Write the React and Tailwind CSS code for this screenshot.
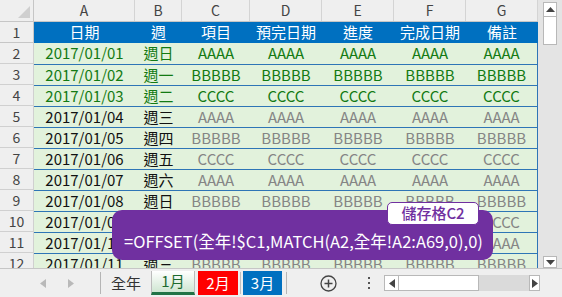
const cols = [
  { key: 'A', w: 'w-[101px]' },
  { key: 'B', w: 'w-[47px]' },
  { key: 'C', w: 'w-[68px]' },
  { key: 'D', w: 'w-[72px]' },
  { key: 'E', w: 'w-[72px]' },
  { key: 'F', w: 'w-[72px]' },
  { key: 'G', w: 'w-[72px]' },
];

const heads = ['日期', '週', '項目', '預完日期', '進度', '完成日期', '備註'];
const days = ['週日', '週一', '週二', '週三', '週四', '週五', '週六'];
const items = ['AAAA', 'BBBBB', 'CCCC'];

const rows = Array.from({ length: 11 }, (_, i) => {
  const d = String(i + 1).padStart(2, '0');
  const v = items[i % 3];
  return [`2017/01/${d}`, days[i % 7], v, v, v, v, v];
});

function Cell({ w, className = '', children }) {
  return (
    <div className={`${w} shrink-0 flex items-center justify-center whitespace-nowrap overflow-hidden ${className}`}>
      {children}
    </div>
  );
}

function Tri({ dir }) {
  return (
    <svg width="6" height="9" viewBox="0 0 6 9">
      {dir === 'l' ? <path d="M6 0 L0 4.5 L6 9 Z" fill="currentColor" /> : <path d="M0 0 L6 4.5 L0 9 Z" fill="currentColor" />}
    </svg>
  );
}

function TriV({ dir }) {
  return (
    <svg width="9" height="5" viewBox="0 0 9 5">
      {dir === 'u' ? <path d="M0 5 L4.5 0 L9 5 Z" fill="currentColor" /> : <path d="M0 0 L4.5 5 L9 0 Z" fill="currentColor" />}
    </svg>
  );
}

export default function App() {
  return (
    <div className="relative w-[562px] h-[297px] overflow-hidden bg-white text-[15px]" style={{ fontFamily: '"Noto Sans CJK TC", "Noto Sans", sans-serif' }}>
      <div className="flex h-[268px]">
        {/* grid */}
        <div className="w-[538px] h-[268px] overflow-hidden">
          {/* column header */}
          <div className="flex h-[22px] bg-[#efefef] border-b border-[#c6c6c6] text-[#444]">
            <div className="w-[34px] shrink-0 border-r border-[#c6c6c6] flex items-end justify-end p-[3px]">
              <svg width="12" height="12" viewBox="0 0 12 12"><path d="M12 0 L12 12 L0 12 Z" fill="#cfcfcf" /></svg>
            </div>
            {cols.map((c) => (
              <Cell key={c.key} w={c.w} className="border-r border-[#d4d4d4] text-[14px]">{c.key}</Cell>
            ))}
          </div>

          {/* row 1 */}
          <div className="flex h-[21px]">
            <div className="w-[34px] shrink-0 bg-[#efefef] border-r border-b border-[#c6c6c6] flex items-center justify-center text-[#444] text-[14px]">1</div>
            {cols.map((c, i) => (
              <Cell key={c.key} w={c.w} className="bg-[#0070c0] text-white">{heads[i]}</Cell>
            ))}
          </div>

          {rows.map((r, ri) => {
            const early = ri < 3;
            return (
              <div key={ri} className="flex h-[21px]">
                <div className="w-[34px] shrink-0 bg-[#efefef] border-r border-b border-[#d0d0d0] flex items-center justify-center text-[#444] text-[14px]">{ri + 2}</div>
                {cols.map((c, ci) => (
                  <Cell
                    key={c.key}
                    w={c.w}
                    className={`bg-[#e2f2dc] ${ri > 0 ? 'border-t border-[#2e75b6]' : ''} ${ci === 6 ? 'border-r border-[#2e75b6]' : ''} ${
                      early ? 'text-[#137a13]' : ci < 2 ? 'text-[#111]' : 'text-[#858585]'
                    }`}
                  >
                    {r[ci]}
                  </Cell>
                ))}
              </div>
            );
          })}
        </div>

        {/* vertical scrollbar */}
        <div className="w-[24px] h-[268px] bg-[#e4e4e4] flex flex-col items-center pt-[2px] pb-0">
          <div className="w-[14px] h-[15px] bg-white border border-[#b8b8b8] flex items-center justify-center text-[#444]"><TriV dir="u" /></div>
          <div className="w-[14px] h-[28px] bg-white border border-[#b8b8b8] border-t-0" />
          <div className="flex-1" />
          <div className="w-[14px] h-[12px] bg-white border border-[#b8b8b8] flex items-center justify-center text-[#444]"><TriV dir="d" /></div>
        </div>
      </div>

      {/* sheet tabs bar */}
      <div className="flex items-center h-[29px] bg-[#efefef] border-t border-[#c6c6c6] text-[15px]">
        <div className="w-[100px] flex items-center justify-center gap-[22px] text-[#b9b9b9] pl-[14px]">
          <Tri dir="l" />
          <Tri dir="r" />
        </div>
        <div className="w-px h-[22px] bg-[#b5b5b5]" />
        <div className="w-[50px] h-[24px] flex items-center justify-center text-[#333]">全年</div>
        <div className="w-[44px] h-[24px] flex items-center justify-center text-[#1d6a2f] bg-gradient-to-b from-white to-[#cfe6d2] border-b-[3px] border-[#217346] border-x border-x-[#bbb]">1月</div>
        <div className="w-[3px]" />
        <div className="w-[40px] h-[24px] flex items-center justify-center text-white bg-[#ff0000]">2月</div>
        <div className="w-px h-[22px] bg-[#c0c0c0] mx-[2px]" />
        <div className="w-[39px] h-[24px] flex items-center justify-center text-white bg-[#0070c0]">3月</div>
        <div className="w-px h-[22px] bg-[#b5b5b5] ml-[4px]" />
        <div className="w-[76px] flex items-center justify-center pl-[6px]">
          <svg width="17" height="17" viewBox="0 0 17 17">
            <circle cx="8.5" cy="8.5" r="7.5" fill="none" stroke="#444" strokeWidth="1.3" />
            <path d="M8.5 4.5 V12.5 M4.5 8.5 H12.5" stroke="#444" strokeWidth="1.5" />
          </svg>
        </div>
        <div className="w-[12px] flex flex-col items-center gap-[3px]">
          <div className="w-[2px] h-[2px] bg-[#555]" />
          <div className="w-[2px] h-[2px] bg-[#555]" />
          <div className="w-[2px] h-[2px] bg-[#555]" />
        </div>
        <div className="ml-[9px] w-[156px] h-[16px] bg-[#dadada] flex items-center">
          <div className="w-[15px] h-[16px] bg-white border border-[#b8b8b8] flex items-center justify-center text-[#444]"><Tri dir="l" /></div>
          <div className="w-[80px] h-[16px] bg-white border border-[#b8b8b8] border-l-0" />
          <div className="flex-1" />
          <div className="w-[11px] h-[16px] bg-white border border-[#b8b8b8] flex items-center justify-center text-[#444]"><Tri dir="r" /></div>
        </div>
      </div>

      {/* formula callout */}
      <div className="absolute left-[112px] top-[210px] w-[381px] h-[50px] rounded-[10px] bg-[#7030a0] text-white text-[16.5px] flex items-center pl-[12px] pt-[12px] whitespace-nowrap">
        =OFFSET(全年!$C1,MATCH(A2,全年!A2:A69,0),0)
      </div>
      <div className="absolute left-[387px] top-[202px] w-[92px] h-[23px] rounded-[5px] bg-white border-[1.5px] border-[#7030a0] text-[#7030a0] text-[15px] font-medium flex items-center justify-center">
        儲存格C2
      </div>
    </div>
  );
}
